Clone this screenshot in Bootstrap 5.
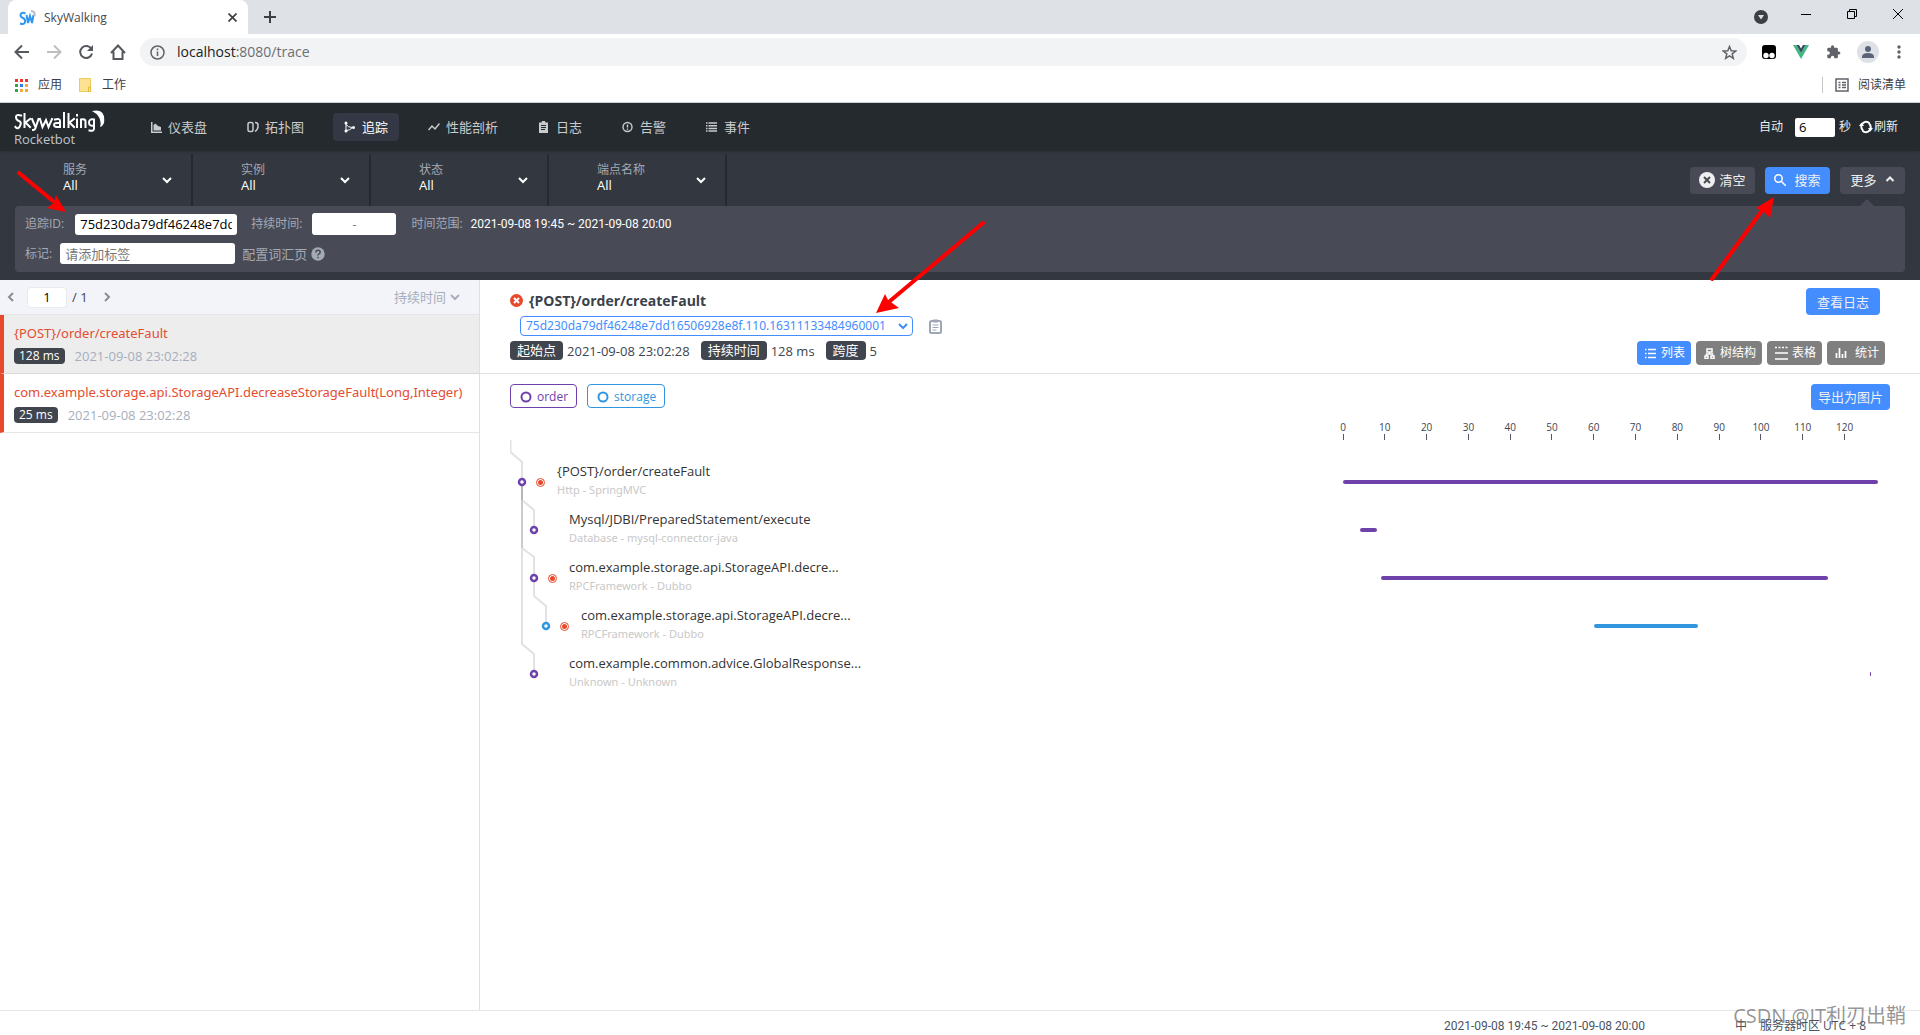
<!DOCTYPE html>
<html lang="zh-CN">
<head>
<meta charset="utf-8">
<meta name="viewport" content="width=device-width, initial-scale=1">
<title>SkyWalking</title>
<link rel="stylesheet" href="https://cdn.jsdelivr.net/npm/bootstrap@5.3.0/dist/css/bootstrap.min.css">
<style>
  body { font-family: "Open Sans", "Noto Sans CJK SC", sans-serif; font-size: 12px; line-height: 16px; color: #3d444f; min-height: 100vh; overflow: hidden; }
  svg { display: block; flex: none; }
  a { color: inherit; text-decoration: none; }
  button { font-size: 12px; line-height: 16px; }
  input, select { font: inherit; min-width: 0; }
  select { appearance: none; background: transparent; border: 0; padding: 0; color: inherit; outline: 0; }
  .plain { background: none; border: 0; padding: 0; color: inherit; }
  .range { font-family: Roboto, "Noto Sans CJK SC", sans-serif; }

  /* browser frame */
  .tabstrip { background: #dee1e6; height: 34px; padding-left: 8px; }
  .pagetab { background: #fff; width: 240px; border-radius: 8px 8px 0 0; padding: 1px 11px 0; color: #45494d; }
  .tabsearch { padding-top: 2px; }
  .wincontrols { gap: 34px; }
  .toolbar-row { height: 36px; padding: 0 17px 0 14px; color: #5f6368; }
  .omnibox { background: #f1f3f4; border-radius: 14px; height: 28px; padding: 0 10px; margin: 0 15px 0 14px; color: #6b6f73; font-size: 14px; }
  .omnibox b { font-weight: 400; color: #202124; }
  .exts { gap: 16px; }
  .bookmarks { height: 33px; padding: 0 14px 3px; border-bottom: 1px solid #d5d7da; color: #3c4043; }
  .bookmarks svg { margin-right: 9px; }
  .readlist { border-left: 1px solid #c4c7cb; padding-left: 12px; }
  .avatar { width: 22px; height: 22px; background: #dee1e6; border-radius: 50%; }

  /* application header */
  .apphead { background: #252a2f; height: 48px; color: #eee; padding: 0 22px 0 14px; position: relative; box-shadow: 0 1px 3px rgba(0,0,0,.2); }
  .brand { width: 93px; margin-right: 33px; padding-top: 3px; color: #c0c4ca; font-size: 13px; line-height: 15px; }
  .menu { gap: 18px; font-size: 13px; color: #c9cbcd; }
  .menu a { padding: 6px 11px; border-radius: 4px; gap: 6px; }
  .menu a.active { background: #333844; color: #fff; }
  .sec { width: 40px; height: 19px; border: 0; border-radius: 2px; padding: 0 4px; color: #000; font-size: 13px; }
  .reload { gap: 1px; }

  /* search conditions */
  .finder { background: #333840; padding: 3px 15px 8px; color: #eee; }
  .cond { width: 178px; height: 52px; border-right: 2px solid #252a2f; padding: 0 19px 0 48px; }
  .cond label { color: #a3a9b5; line-height: 14px; }
  .cond select { font-size: 13px; line-height: 16px; color: #fff; }
  .acts { gap: 10px; }
  .act { background: #484b56; border: 0; border-radius: 4px; height: 27px; width: 65px; color: #efeff1; font-size: 13px; }
  .primary { background: #448dfe; }
  .more { background: #484b56; border-radius: 4px; padding: 7px 10px 8px; color: #a3a9b5; }
  .more input { border: 0; border-radius: 3px; height: 21px; padding: 0 5px; color: #000; }
  .more .tid { width: 162px; font-size: 13px; margin: 0 14px 0 11px; }
  .more .dur { width: 84px; height: 22px; margin: 0 15px 0 10px; color: #777; }
  .more .tagbox { width: 175px; margin: 0 7px 0 8px; font-size: 13px; }
  .more .tagbox::placeholder { color: #777; }
  .more .vocab { font-size: 13px; }
  .notch { right: 30px; bottom: -1px; border: 8px solid transparent; border-top: 0; border-bottom-color: #484b56; }

  /* trace list */
  .side { width: 480px; border-right: 1px solid #dee0e4; }
  .pager { background: #f3f4f9; height: 35px; border-bottom: 1px solid #e4e5e9; padding: 0 19px 0 7px; font-size: 13px; }
  .pager input { width: 40px; height: 21px; margin: 0 5px 0 13px; border: 1px solid #e9eaee; border-radius: 4px; background: #fff; color: #000; text-align: center; }
  .pager button { font-size: 13px; }
  .trace { border-left: 4px solid #e8492b; border-bottom: 1px solid #e6e6e6; padding: 10px 10px 8px; height: 59px; }
  .trace.on { background: #ededed; border-bottom-color: #d9d9dc; }
  .trace a { color: #e54c30; font-family: "Noto Sans", sans-serif; font-size: 13px; line-height: 17px; white-space: nowrap; }
  .trace .meta { margin-top: 6px; }
  .trace .muted { font-size: 13px; margin-left: 10px; }
  .chip { background: #40454e; color: #fff; border-radius: 4px; padding: 0 5px; }
  .muted { color: #a7aebb; }

  /* trace detail */
  .dethead { border-bottom: 1px solid #dfe0e3; height: 94px; padding: 8px 35px 8px 30px; }
  .dethead h1 { font-size: 14px; line-height: 25px; font-weight: 700; margin: 0; gap: 6px; color: #3a414b; }
  .idpick { border: 1px solid #448dfe; border-radius: 4px; width: 393px; height: 20px; margin: 3px 0 0 10px; padding: 0 4px 0 5px; color: #448dfe; font-family: "Noto Sans", sans-serif; }
  .facts { font-size: 13px; margin-top: 5px; }
  .facts .chip { height: 19px; line-height: 19px; padding: 0 7px; margin-right: 4px; }
  .facts .val { margin-right: 11px; }
  .views { gap: 5px; }
  .view { background: #7f7f7f; color: #fff; border: 0; border-radius: 4px; height: 24px; padding: 0 6px 0 8px; gap: 4px; }
  .view.on { background: #448dfe; }
  .logbtn { width: 74px; height: 27px; margin-right: 5px; }
  .chart { padding: 10px 30px 0; }
  .legend { gap: 10px; }
  .legend-tag { border: 1px solid; border-radius: 4px; height: 24px; padding: 1px 8px 0 9px; gap: 5px; background: #fff; }
  .cv0 { color: #6f42ab; } .cv1 { color: #3196dd; }
  .export { width: 79px; height: 26px; }
  .scale { width: 535px; margin: 11px 12px 0 auto; font-size: 10px; line-height: 12px; }
  .tick::after { content: ""; display: block; width: 1px; height: 6px; margin: 1px auto 0; background: #535a66; }
  .tree { padding-top: 18px; }
  .links { left: 0; top: 0; }
  .span-row { height: 48px; padding-right: 12px; }
  .span-row .txt { line-height: 18px; font-size: 13px; color: #333; padding-bottom: 3px; }
  .span-row small { display: block; font-size: 11px; line-height: 19px; color: #c8c8c8; font-family: "Noto Sans", sans-serif; }
  .lv1 { padding-left: 47px; } .lv2 { padding-left: 59px; } .lv3 { padding-left: 71px; }
  .track { width: 535px; flex: none; }
  .bar { height: 4px; border-radius: 2px; background: currentColor; }
  .foot { border-top: 1px solid #e6e7ea; height: 25px; padding: 7px 54px 0 0; color: #4c535f; white-space: nowrap; }
  .foot .zone { margin: 0 13px 0 90px; }
  .arrows { left: 0; top: 0; z-index: 5; pointer-events: none; }
  .wm { right: 14px; bottom: 5px; font-size: 20px; line-height: 28px; color: rgba(90,90,90,.65); z-index: 6; }
</style>
</head>
<body class="d-flex flex-column position-relative">

<div class="tabstrip d-flex">
  <div class="pagetab d-flex align-items-center">
    <svg width="17" height="16" viewBox="0 0 17 16" fill="none" stroke="#2f96f2" stroke-width="2"><path d="M6.500 3.500Q2 1.500 1.500 5q0 2 2.500 3t2 4-5 1.500M7.500 5l1.500 8 2-7 2 7 1.500-8"/><path d="M12 1q4.500 0 3.500 5" stroke="#bbb"/></svg>
    <span class="ms-2 flex-grow-1">SkyWalking</span>
    <button class="plain" aria-label="关闭标签页"><svg width="9" height="9" stroke="#3c4043" stroke-width="1.700"><path d="M.5.5l8 8M8.500.5l-8 8"/></svg></button>
  </div>
  <button class="plain px-3" aria-label="新标签页"><svg width="12" height="12" stroke="#3c4043" stroke-width="2"><path d="M6 0v12M0 6h12"/></svg></button>
  <div class="ms-auto d-flex pt-2 pe-3">
    <button class="plain tabsearch align-self-start me-1" aria-label="搜索标签页"><svg width="14" height="14"><circle cx="7" cy="7" r="7" fill="#3c4043"/><path d="M4 5h6l-3 4.500z" fill="#dee1e6"/></svg></button>
    <div class="wincontrols d-flex ms-4 align-items-start">
      <svg class="ms-1" width="12" height="14" stroke="#000"><path d="M1 6.500h10"/></svg>
      <svg width="12" height="14" fill="none" stroke="#000"><path d="M1.500 3.500h7v7h-7zM3.500 3.500v-2h7v7h-2"/></svg>
      <svg width="12" height="14" stroke="#000"><path d="M1 1l10 10M11 1L1 11"/></svg>
    </div>
  </div>
</div>

<div class="toolbar-row d-flex align-items-center">
  <button class="plain" aria-label="后退"><svg width="16" height="16" fill="none" stroke="#55595d" stroke-width="2"><path d="M15 8H2M8 1.500L1.500 8 8 14.500"/></svg></button>
  <button class="plain ms-3" aria-label="前进"><svg width="16" height="16" fill="none" stroke="#bdbfc1" stroke-width="2"><path d="M1 8h13M8 1.500L14.500 8 8 14.500"/></svg></button>
  <button class="plain ms-3" aria-label="刷新"><svg width="16" height="16" fill="none" stroke="#55595d" stroke-width="2"><path d="M13.500 5.200A6 6 0 1 0 14 9.500"/><path d="M15 1v6H9z" fill="#55595d" stroke="none"/></svg></button>
  <button class="plain ms-3" aria-label="主页"><svg width="16" height="16" fill="none" stroke="#55595d" stroke-width="2"><path d="M1 9l7-7.500L15 9M3.500 7.500V15h9V7.500"/></svg></button>
  <div class="omnibox d-flex align-items-center flex-grow-1">
    <svg width="15" height="15" fill="none" stroke="#5f6368" stroke-width="1.500"><circle cx="7.500" cy="7.500" r="6.500"/><path d="M7.500 6.500V11M7.500 3.500v1.700"/></svg>
    <span class="ms-2 ps-1 flex-grow-1"><b>localhost</b>:8080/trace</span>
    <svg width="15" height="15" viewBox="0 0 15 15" fill="none" stroke="#5f6368" stroke-width="1.500"><path d="M7.500 1.500l1.700 4.200 4.500.3-3.500 2.900 1.100 4.400-3.800-2.400-3.800 2.400 1.100-4.400L1.300 6l4.500-.3z"/></svg>
  </div>
  <div class="exts d-flex align-items-center">
    <svg width="15" height="14"><rect width="14" height="14" rx="3"/><circle cx="4" cy="10.500" r="2.700" fill="#fff"/><circle cx="10" cy="10.500" r="2.700" fill="#fff"/></svg>
    <svg width="17" height="14"><path d="M0 0h3.500L8 8l4.500-8H16L8 14z" fill="#41b883"/><path d="M3.500 0H6l2 3.500L10 0h2.500L8 8z" fill="#35495e"/></svg>
    <svg width="15" height="16" viewBox="0 0 24 24" fill="#5f6368"><path d="M20.500 11H19V7a2 2 0 0 0-2-2h-4V3.500a2.500 2.500 0 0 0-5 0V5H4a2 2 0 0 0-2 2v3.800h1.500a2.700 2.700 0 0 1 0 5.400H2V20a2 2 0 0 0 2 2h3.800v-1.500a2.700 2.700 0 0 1 5.400 0V22H17a2 2 0 0 0 2-2v-4h1.500a2.500 2.500 0 0 0 0-5z"/></svg>
    <div class="avatar d-flex align-items-center justify-content-center"><svg width="14" height="14" fill="#5a6378"><circle cx="7" cy="4" r="3"/><path d="M1 13V11q1-3 6-3t6 3v2z"/></svg></div>
    <svg width="8" height="14" fill="#5f6368"><circle cx="4" cy="2" r="1.700"/><circle cx="4" cy="7" r="1.700"/><circle cx="4" cy="12" r="1.700"/></svg>
  </div>
</div>

<div class="bookmarks d-flex align-items-center">
  <svg width="15" height="14"><g fill="#e8372c"><path d="M1 1h3v3H1zM6 1h3v3H6zM11 1h3v3h-3z"/></g><g fill="#34a054"><path d="M1 6h3v3H1zM1 11h3v3H1z"/></g><path d="M6 6h3v3H6z" fill="#2f7de9"/><g fill="#f3a93c"><path d="M11 6h3v3h-3zM6 11h3v3H6zM11 11h3v3h-3z"/></g></svg>
  <a href="#">应用</a>
  <svg class="ms-3" width="15" height="14"><path d="M1.500.5h11v13h-11z" fill="#fde293" stroke="#eccb60"/><path d="M10.500 9h2v4.500h-2z" fill="#fbe9ae" stroke="#e5b93c"/></svg>
  <a href="#">工作</a>
  <div class="readlist ms-auto d-flex align-items-center"><svg width="14" height="14" fill="none" stroke="#5f6368" stroke-width="1.500"><path d="M1 1h12v12H1zM3.500 4.500h2M7 4.500h4M3.500 7h2M7 7h4M3.500 9.500h2M7 9.500h4"/></svg><a href="#">阅读清单</a></div>
</div>

<header class="apphead d-flex align-items-center">
  <div class="brand">
    <svg width="93" height="22" viewBox="0 0 93 22" fill="none" stroke="#fff" stroke-width="2" stroke-linecap="square"><path d="M7 4.500Q2 3 2 6t3 4 1 5-4.500 1M10.500 3v13M16 8l-4.500 3.500L16 16M18 8l3 7M24.500 8l-3 9q-.5 2-2.500 2M26 8l2.500 8L32 9l2.500 7L38 8M41 8.500q5-1.500 5 1.500v6q-6 .5-6-2t5-2M50 2v14M54.500 3v13M60 8l-4.500 3.500L60 16M63 8.500V16M63 4v.500M67 16V8.500q4.500-1 4.500 2V16M80 8.500q-5-1-5 3t5 3V8.500v9q0 3-4.500 2" transform="translate(0 1)"/><path d="M78 1q14-3 12 12-1 3-4 4 3-10-8-16z" fill="#fff" stroke="none"/></svg>
    <div>Rocketbot</div>
  </div>
  <nav class="menu d-flex">
    <a href="#" class="d-flex align-items-center"><svg width="11" height="11" fill="#c9cbcd"><path d="M0 0h1.500v9.500H11V11H0zM2.500 3l2-1.500L7 4l3 1v3.500H2.500z"/></svg>仪表盘</a>
    <a href="#" class="d-flex align-items-center"><svg width="12" height="12" fill="none" stroke="#c9cbcd" stroke-width="1.500"><rect x="1" y="1.500" width="5" height="9" rx="1.500"/><path d="M8 1.500q3 0 3 2.500v1.500q0 3-3 5"/></svg>拓扑图</a>
    <a href="#" class="active d-flex align-items-center"><svg width="12" height="12" fill="none" stroke="#fff"><path d="M2 2.500v7M2 3.500q2 3 6.500 3M2 9.500q4 0 6.500-3"/><g fill="#fff" stroke="none"><circle cx="2" cy="2" r="1.500"/><circle cx="2" cy="10" r="1.500"/><circle cx="9.500" cy="6.500" r="1.500"/></g></svg>追踪</a>
    <a href="#" class="d-flex align-items-center"><svg width="12" height="8" fill="none" stroke="#c9cbcd" stroke-width="1.500"><path d="M.5 7L4 3l3 3 4.500-5.500"/></svg>性能剖析</a>
    <a href="#" class="d-flex align-items-center"><svg width="12" height="12"><path d="M1 1.500h2.500L4 0h3l.500 1.500H10V12H1z" fill="#c9cbcd"/><path d="M3 4.500h5M3 6.500h5M3 8.500h4" stroke="#252a2f"/></svg>日志</a>
    <a href="#" class="d-flex align-items-center"><svg width="12" height="12" fill="none" stroke="#c9cbcd" stroke-width="1.400"><circle cx="5.500" cy="6" r="4.500"/><path d="M5.500 3.500v3M5.500 7.500v1.200"/></svg>告警</a>
    <a href="#" class="d-flex align-items-center"><svg width="12" height="10" stroke="#c9cbcd" stroke-width="1.500"><path d="M0 1h1.500M2.500 1H11M0 3.700h1.500M2.500 3.700H11M0 6.400h1.500M2.500 6.400H11M0 9h1.500M2.500 9H11"/></svg>事件</a>
  </nav>
  <div class="ms-auto d-flex align-items-center">
    <label for="sec" class="me-2 pe-1">自动</label>
    <input id="sec" class="sec me-1" value="6"><span>秒</span>
    <button class="plain reload d-flex align-items-center ms-2"><svg width="14" height="14" fill="none" stroke="#fff" stroke-width="2"><path d="M4 10.500A5 5 0 0 1 5 2.300q3-1.300 5.500 1M10 3.500A5 5 0 0 1 9 11.700q-3 1.300-5.500-1"/><path d="M0 6h5L2.500 2.500zM9 8h5l-2.500 3.500z" fill="#fff" stroke="none"/></svg>刷新</button>
  </div>
</header>

<section class="finder">
  <div class="d-flex position-relative">
    <div class="cond d-flex align-items-center"><div class="flex-grow-1 pb-1"><label for="c1" class="d-block">服务</label><select id="c1" class="d-block w-100"><option>All</option></select></div><svg width="10" height="7" fill="none" stroke="#fff" stroke-width="2"><path d="M1 1l4 4 4-4"/></svg></div>
    <div class="cond d-flex align-items-center"><div class="flex-grow-1 pb-1"><label for="c2" class="d-block">实例</label><select id="c2" class="d-block w-100"><option>All</option></select></div><svg width="10" height="7" fill="none" stroke="#fff" stroke-width="2"><path d="M1 1l4 4 4-4"/></svg></div>
    <div class="cond d-flex align-items-center"><div class="flex-grow-1 pb-1"><label for="c3" class="d-block">状态</label><select id="c3" class="d-block w-100"><option>All</option></select></div><svg width="10" height="7" fill="none" stroke="#fff" stroke-width="2"><path d="M1 1l4 4 4-4"/></svg></div>
    <div class="cond d-flex align-items-center"><div class="flex-grow-1 pb-1"><label for="c4" class="d-block">端点名称</label><select id="c4" class="d-block w-100"><option>All</option></select></div><svg width="10" height="7" fill="none" stroke="#fff" stroke-width="2"><path d="M1 1l4 4 4-4"/></svg></div>
    <div class="acts ms-auto d-flex align-items-center">
      <button class="act d-flex align-items-center justify-content-center gap-1"><svg width="16" height="16"><circle cx="8" cy="8" r="8" fill="#efeff1"/><path d="M5 5l6 6M11 5l-6 6" stroke="#484b56" stroke-width="2"/></svg>清空</button>
      <button class="act primary d-flex align-items-center justify-content-center gap-2"><svg width="12" height="12" fill="none" stroke="#fff" stroke-width="1.500"><circle cx="4.500" cy="4.500" r="3.700"/><path d="M7.500 7.500L12 12"/></svg>搜索</button>
      <button class="act d-flex align-items-center justify-content-center gap-2">更多<svg width="10" height="8" fill="none" stroke="#efeff1" stroke-width="2"><path d="M1.500 5L5 1.500 8.500 5"/></svg></button>
    </div>
    <i class="notch position-absolute"></i>
  </div>
  <div class="more">
    <div class="d-flex align-items-center">
      <label for="tid">追踪ID:</label><input id="tid" class="tid" value="75d230da79df46248e7dd16506928e8f.110.16311133484960001">
      <label for="dur">持续时间:</label><input id="dur" class="dur text-center" value="-">
      <span>时间范围:</span><span class="range text-white ms-2">2021-09-08 19:45 ~ 2021-09-08 20:00</span>
    </div>
    <div class="d-flex align-items-center mt-2">
      <label for="tags">标记:</label><input id="tags" class="tagbox" placeholder="请添加标签">
      <a href="#" class="vocab d-flex align-items-center">配置词汇页<svg class="ms-1" width="14" height="14"><circle cx="7" cy="7" r="6.700" fill="#a3a9b5"/><path d="M4.800 5.500q0-2.300 2.200-2.300t2.200 2q0 1-1.200 1.700T7 8.500M7 9.800v1.500" fill="none" stroke="#484b56" stroke-width="1.500"/></svg></a>
    </div>
  </div>
</section>

<main class="d-flex flex-grow-1">
  <aside class="side flex-shrink-0">
    <div class="pager d-flex align-items-center">
      <button class="plain" aria-label="上一页"><svg width="7" height="10" fill="none" stroke="#888d96" stroke-width="2"><path d="M6 1L2 5l4 4"/></svg></button>
      <input aria-label="页码" value="1"><span>/ 1</span>
      <button class="plain ms-3" aria-label="下一页"><svg width="7" height="10" fill="none" stroke="#888d96" stroke-width="2"><path d="M1 1l4 4-4 4"/></svg></button>
      <button class="plain ms-auto d-flex align-items-center gap-1 muted">持续时间<svg width="10" height="7" fill="none" stroke="#a7aebb" stroke-width="2"><path d="M1 1l4 4 4-4"/></svg></button>
    </div>
    <div class="trace on"><a href="#" class="d-block">{POST}/order/createFault</a><div class="meta d-flex align-items-center"><span class="chip">128 ms</span><span class="muted">2021-09-08 23:02:28</span></div></div>
    <div class="trace"><a href="#" class="d-block">com.example.storage.api.StorageAPI.decreaseStorageFault(Long,Integer)</a><div class="meta d-flex align-items-center"><span class="chip">25 ms</span><span class="muted">2021-09-08 23:02:28</span></div></div>
  </aside>

  <section class="flex-grow-1">
    <div class="dethead d-flex justify-content-between">
      <div>
        <h1 class="d-flex align-items-center"><svg width="13" height="13"><circle cx="6.500" cy="6.500" r="6.500" fill="#e8492b"/><path d="M4 4l5 5M9 4L4 9" stroke="#fff" stroke-width="2"/></svg>{POST}/order/createFault</h1>
        <div class="d-flex align-items-center">
          <div class="idpick d-flex align-items-center"><select class="flex-grow-1" aria-label="追踪ID"><option>75d230da79df46248e7dd16506928e8f.110.16311133484960001</option></select><svg width="10" height="7" fill="none" stroke="#448dfe" stroke-width="2"><path d="M1 1l4 4 4-4"/></svg></div>
          <button class="plain ms-3 pt-1" aria-label="复制"><svg width="13" height="15" fill="none" stroke="#9fa6b3" stroke-width="2"><rect x="1" y="2" width="11" height="12" rx="1.500"/><path d="M4 2h5" stroke-width="3"/><path d="M3.500 6h6M3.500 8.500h6M3.500 11h4" stroke-width="1"/></svg></button>
        </div>
        <div class="facts d-flex align-items-center">
          <span class="chip">起始点</span><span class="val">2021-09-08 23:02:28</span>
          <span class="chip">持续时间</span><span class="val">128 ms</span>
          <span class="chip">跨度</span><span>5</span>
        </div>
      </div>
      <div class="d-flex flex-column justify-content-between align-items-end">
        <button class="act primary logbtn">查看日志</button>
        <div class="views d-flex">
          <button class="view on d-flex align-items-center"><svg width="12" height="11" stroke="#fff" stroke-width="1.300"><path d="M0 1.500h1.500M3 1.500h8M0 5.500h1.500M3 5.500h8M0 9.500h1.500M3 9.500h8"/></svg>列表</button>
          <button class="view d-flex align-items-center"><svg width="12" height="11" fill="none" stroke="#fff" stroke-width="1.500"><path d="M3 1h5v3H3zM5.500 4v2M2.500 8V6h6v2M1 8h3v2.500H1zM7 8h3v2.500H7z"/></svg>树结构</button>
          <button class="view d-flex align-items-center"><svg width="13" height="14" stroke="#fff" stroke-width="1.700"><path d="M0 1.500h13" stroke-dasharray="2 1.500"/><path d="M0 7h13M0 13h13"/></svg>表格</button>
          <button class="view d-flex align-items-center"><svg width="12" height="12" stroke="#fff" stroke-width="1.700"><path d="M1.500 11V6M4.500 11V1M7.500 11V7M10.500 11V4"/></svg><span class="px-1 pe-0">统计</span></button>
        </div>
      </div>
    </div>

    <div class="chart">
      <div class="legend d-flex align-items-start">
        <button class="legend-tag cv0 d-flex align-items-center"><svg width="12" height="12" fill="none" stroke="currentColor" stroke-width="2"><circle cx="6" cy="6" r="4.500"/></svg>order</button>
        <button class="legend-tag cv1 d-flex align-items-center"><svg width="12" height="12" fill="none" stroke="currentColor" stroke-width="2"><circle cx="6" cy="6" r="4.500"/></svg>storage</button>
        <button class="act primary export ms-auto">导出为图片</button>
      </div>
      <div class="scale d-flex" id="scale"></div>
      <div class="tree position-relative">
        <svg class="links position-absolute" width="80" height="250" fill="none">
          <g stroke="#e2e2e2" stroke-width="2"><path d="M.5 0v12l11.500 10v20"/><path d="M12 42v18l12 10v20M12 60v48l12 9v21M24 138v18l12 10v20M12 108v96l12 10v20"/></g>
          <path d="M12 42v18" stroke="#b5b5b5" stroke-width="2"/><path d="M12 60v48" stroke="#cbcbcb" stroke-width="2"/>
          <g fill="#fff" stroke="#6f42ab" stroke-width="2.500"><circle cx="12" cy="42" r="3"/><circle cx="24" cy="90" r="3"/><circle cx="24" cy="138" r="3"/><circle cx="36" cy="186" r="3" stroke="#3196dd"/><circle cx="24" cy="234" r="3"/></g>
          <g stroke="#e8492b"><circle cx="30.500" cy="42.500" r="4"/><circle cx="42.500" cy="138.500" r="4"/><circle cx="54.500" cy="186.500" r="4"/></g>
          <g fill="#e8492b"><circle cx="30.500" cy="42.500" r="2.500"/><circle cx="42.500" cy="138.500" r="2.500"/><circle cx="54.500" cy="186.500" r="2.500"/></g>
        </svg>
        <div id="spans"></div>
      </div>
    </div>
  </section>
</main>

<footer class="foot d-flex justify-content-end"><span class="range">2021-09-08 19:45 ~ 2021-09-08 20:00</span><span class="zone">中</span><span>服务器时区 UTC + 8</span></footer>

<div class="wm position-absolute">CSDN @IT利刃出鞘</div>
<svg class="arrows position-absolute" width="1920" height="320" stroke="#f00" stroke-width="4" fill="#f00" stroke-linecap="round">
  <path d="M19 173l34 28"/><path d="M66 212L47 208l7-5 2-8z" stroke="none"/>
  <path d="M983 223l-93 78"/><path d="M876 313l9-19 3 6 11 8z" stroke="none"/>
  <path d="M1712 279l49-67"/><path d="M1774 197l-4 21-6-6-8-4z" stroke="none"/>
</svg>

<script src="https://cdn.jsdelivr.net/npm/bootstrap@5.3.0/dist/js/bootstrap.bundle.min.js"></script>
<script>
  const total = 128;
  const pct = v => (v / total * 100) + '%';
  let ticks = '';
  for (let t = 0; t <= 120; t += 10)
    ticks += `<div class="tick text-center flex-shrink-0" style="width:${pct(10)};${t ? '' : 'margin-left:' + pct(-5)}">${t}</div>`;
  document.getElementById('scale').innerHTML = ticks;

  const spans = [
    [1, '{POST}/order/createFault', 'Http - SpringMVC', 0, 128, 'cv0'],
    [2, 'Mysql/JDBI/PreparedStatement/execute', 'Database - mysql-connector-java', 4, 4.2, 'cv0'],
    [2, 'com.example.storage.api.StorageAPI.decre...', 'RPCFramework - Dubbo', 9, 107, 'cv0'],
    [3, 'com.example.storage.api.StorageAPI.decre...', 'RPCFramework - Dubbo', 60, 25, 'cv1'],
    [2, 'com.example.common.advice.GlobalResponse...', 'Unknown - Unknown', 126, 0.3, 'cv0']
  ];
  document.getElementById('spans').innerHTML = spans.map(([lv, name, kind, start, len, c]) =>
    `<div class="span-row d-flex align-items-center lv${lv}"><div class="txt flex-grow-1">${name}<small>${kind}</small></div>` +
    `<div class="track"><div class="bar ${c}" style="margin-left:${pct(start)};width:${pct(len)}"></div></div></div>`).join('');
</script>
</body>
</html>
